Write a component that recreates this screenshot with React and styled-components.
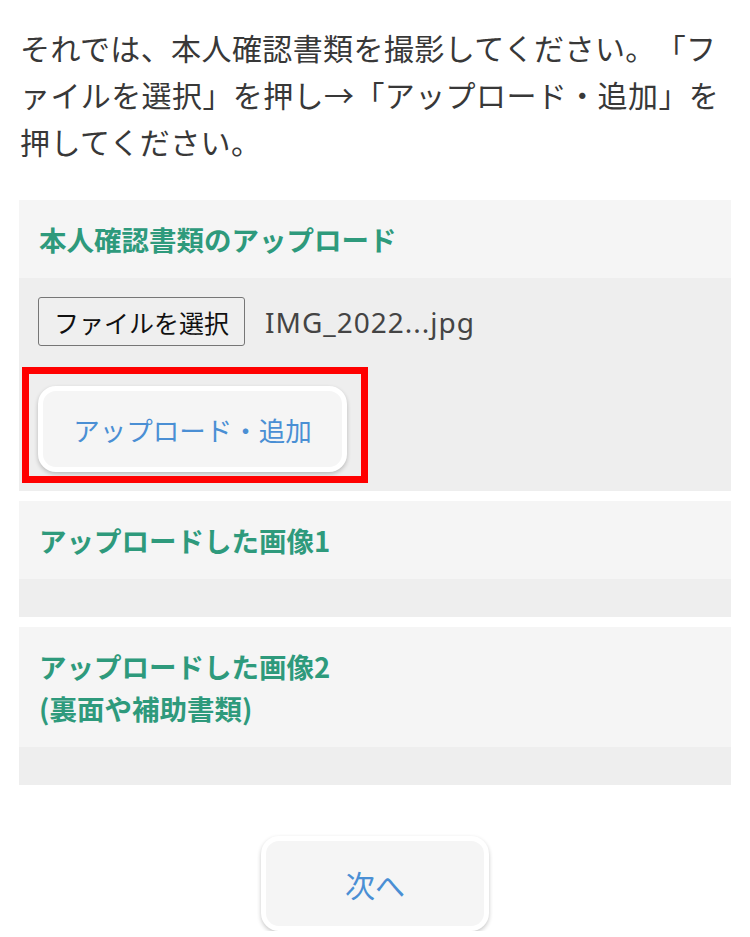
import React from 'react';
import styled, { createGlobalStyle } from 'styled-components';

const GlobalStyle = createGlobalStyle`
  html, body {
    margin: 0;
    padding: 0;
    background: #fff;
  }
  body {
    font-family: 'Noto Sans CJK JP', 'Noto Sans', sans-serif;
    color: #333;
    text-spacing-trim: space-all;
  }
`;

const Page = styled.div`
  width: 750px;
  box-sizing: border-box;
  padding: 24px 19px 0;
`;

const Lead = styled.p`
  margin: 0 0 35px;
  padding-left: 1px;
  font-size: 30px;
  line-height: 47px;
  letter-spacing: 0.4px;
  color: #383838;
`;

const Panel = styled.section`
  margin-bottom: 10px;
`;

const PanelHead = styled.h3`
  margin: 0;
  padding: 18px 20px;
  background: #f5f5f5;
  color: #2e9a7c;
  font-size: 27.5px;
  line-height: 42px;
  font-weight: 700;
`;

const PanelBody = styled.div`
  background: #eeeeee;
  padding: 19px;
  display: flex;
  flex-direction: column;
  align-items: flex-start;
`;

const FileRow = styled.div`
  display: flex;
  align-items: center;
  gap: 20px;
`;

const FileButton = styled.button`
  height: 49px;
  padding: 0 15px;
  font-family: inherit;
  font-size: 25px;
  color: #111;
  background: #efefef;
  border: 1px solid #767676;
  border-radius: 3px;
`;

const FileName = styled.span`
  font-size: 28px;
  letter-spacing: 1px;
  color: #444;
  font-family: 'Noto Sans', 'Noto Sans CJK JP', sans-serif;
`;

const Highlight = styled.div`
  position: relative;
  margin-top: 40px;

  &::after {
    content: '';
    position: absolute;
    top: -19px;
    left: -16px;
    right: -21px;
    bottom: -11px;
    border: 7px solid #ff0000;
    pointer-events: none;
  }
`;

const SoftButton = styled.button`
  display: flex;
  align-items: center;
  justify-content: center;
  box-sizing: border-box;
  width: ${({ $w }) => $w}px;
  height: ${({ $h }) => $h}px;
  background: #f5f5f5;
  border: 5px solid #fff;
  border-radius: 18px;
  box-shadow: 0 2px 4px rgba(0, 0, 0, 0.22);
  color: #4a8fd4;
  font-family: inherit;
  font-size: ${({ $fs }) => $fs}px;
  padding: 0;
  cursor: pointer;
`;

const Footer = styled.div`
  display: flex;
  justify-content: center;
  padding-top: 41px;
`;

export default function App() {
  return (
    <>
      <GlobalStyle />
      <Page>
        <Lead>
          それでは、本人確認書類を撮影してください。「ファイルを選択」を押し→「アップロード・追加」を押してください。
        </Lead>

        <Panel>
          <PanelHead>本人確認書類のアップロード</PanelHead>
          <PanelBody>
            <FileRow>
              <FileButton>ファイルを選択</FileButton>
              <FileName>IMG_2022...jpg</FileName>
            </FileRow>
            <Highlight>
              <SoftButton $w={309} $h={86} $fs={26.5}>アップロード・追加</SoftButton>
            </Highlight>
          </PanelBody>
        </Panel>

        <Panel>
          <PanelHead>アップロードした画像1</PanelHead>
          <PanelBody />
        </Panel>

        <Panel>
          <PanelHead>
            アップロードした画像2
            <br />
            (裏面や補助書類)
          </PanelHead>
          <PanelBody />
        </Panel>

        <Footer>
          <SoftButton $w={228} $h={95} $fs={30}>次へ</SoftButton>
        </Footer>
      </Page>
    </>
  );
}
